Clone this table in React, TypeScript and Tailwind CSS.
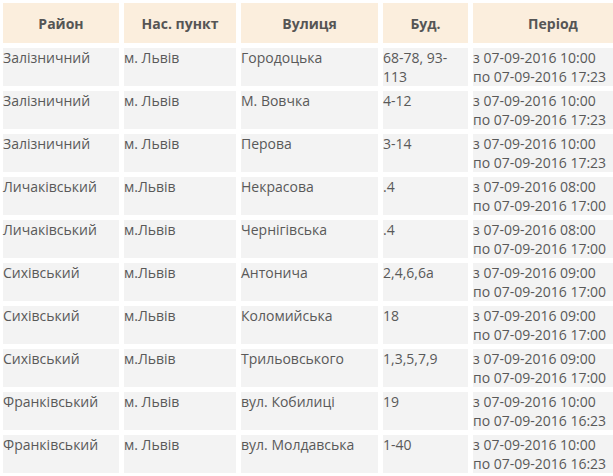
import React from "react";

const rows: [string, string, string, string, string, string][] = [
  ["Залізничний", "м. Львів", "Городоцька", "68-78, 93-113", "з 07-09-2016 10:00", "по 07-09-2016 17:23"],
  ["Залізничний", "м. Львів", "М. Вовчка", "4-12", "з 07-09-2016 10:00", "по 07-09-2016 17:23"],
  ["Залізничний", "м. Львів", "Перова", "3-14", "з 07-09-2016 10:00", "по 07-09-2016 17:23"],
  ["Личаківський", "м.Львів", "Некрасова", ".4", "з 07-09-2016 08:00", "по 07-09-2016 17:00"],
  ["Личаківський", "м.Львів", "Чернігівська", ".4", "з 07-09-2016 08:00", "по 07-09-2016 17:00"],
  ["Сихівський", "м.Львів", "Антонича", "2,4,6,6а", "з 07-09-2016 09:00", "по 07-09-2016 17:00"],
  ["Сихівський", "м.Львів", "Коломийська", "18", "з 07-09-2016 09:00", "по 07-09-2016 17:00"],
  ["Сихівський", "м.Львів", "Трильовського", "1,3,5,7,9", "з 07-09-2016 09:00", "по 07-09-2016 17:00"],
  ["Франківський", "м. Львів", "вул. Кобилиці", "19", "з 07-09-2016 10:00", "по 07-09-2016 16:23"],
  ["Франківський", "м. Львів", "вул. Молдавська", "1-40", "з 07-09-2016 10:00", "по 07-09-2016 16:23"],
];

export default function App() {
  const td = "bg-[#f3f3f3] p-0 align-top text-left";
  const th = "bg-[#fbeedd] h-[40px] p-0 text-center font-bold text-[#555555]";
  return (
    <div
      className="w-[613px] h-[476px] overflow-hidden bg-white text-[14px] leading-[19px] text-[#595959]"
      style={{ fontFamily: '"Open Sans", "Noto Sans", sans-serif' }}
    >
      <table className="table-fixed border-separate border-spacing-[5px] w-[640px] -ml-[2px] -mt-[2px]">
        <colgroup>
          <col className="w-[116px]" />
          <col className="w-[112px]" />
          <col className="w-[137px]" />
          <col className="w-[85px]" />
          <col className="w-[160px]" />
        </colgroup>
        <thead>
          <tr>
            <th className={th}>Район</th>
            <th className={th}>Нас. пункт</th>
            <th className={th}>Вулиця</th>
            <th className={th}>Буд.</th>
            <th className={th}>Період</th>
          </tr>
        </thead>
        <tbody>
          {rows.map((r, i) => (
            <tr key={i}>
              <td className={td}>{r[0]}</td>
              <td className={td}>{r[1]}</td>
              <td className={td}>{r[2]}</td>
              <td className={td}>{r[3]}</td>
              <td className={td}>
                {r[4]}
                <br />
                {r[5]}
              </td>
            </tr>
          ))}
        </tbody>
      </table>
    </div>
  );
}
